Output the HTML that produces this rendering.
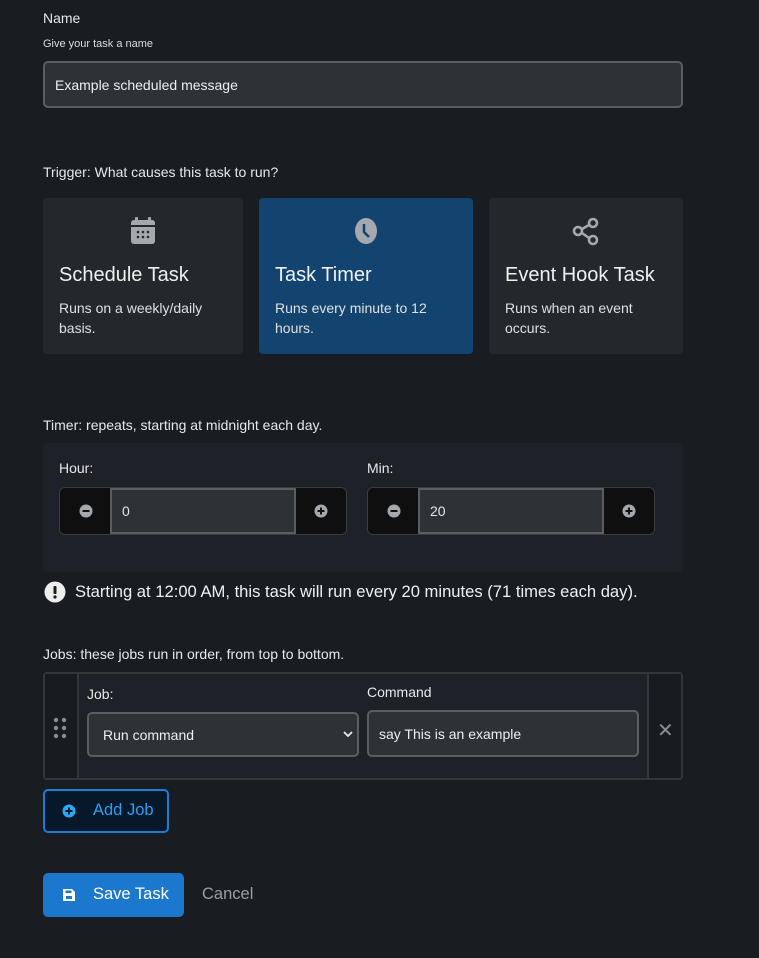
<!DOCTYPE html>
<html><head><style>
*{box-sizing:border-box;margin:0;padding:0}
body{width:759px;height:958px;background:#191c20;font-family:"Liberation Sans",sans-serif;color:#e6e6e6;position:relative;overflow:hidden}
.a{position:absolute}
.lbl{font-size:14px;color:#e8e8e8}
.card{position:absolute;top:198px;height:156px;background:#24282c;border-radius:4px}
.card.sel{background:#13436f}
.card h3{position:absolute;left:16px;top:66px;font-size:20px;font-weight:normal;color:#f0f0f0}
.card p{position:absolute;left:16px;top:100px;font-size:14px;line-height:20px;color:#e0e0e0;width:170px}
.card svg{position:absolute;top:18px}
.grp{position:absolute;top:487px;height:48px;border:1px solid #3a3e42;border-radius:6px;background:#111;overflow:hidden}
.grp .m{position:absolute;top:0;width:50px;height:46px;background:#0f0f0f}
.grp .in{position:absolute;top:0;left:50px;height:46px;background:#2e3236;border:2px solid #5a5e62;font-size:14px;padding:13px 10px}
</style></head><body>
<div class="a lbl" style="left:43px;top:10px">Name</div>
<div class="a" style="left:43px;top:38px;font-size:11px;color:#ddd">Give your task a name</div>
<div class="a" style="left:43px;top:61px;width:640px;height:47px;background:#2e3236;border:2px solid #5a5e62;border-radius:5px;font-size:14px;padding:14px 10px;color:#eee">Example scheduled message</div>
<div class="a lbl" style="left:43px;top:164px">Trigger: What causes this task to run?</div>

<div class="card" style="left:43px;width:200px">
<svg style="left:86px" width="28" height="30" viewBox="0 0 28 30"><rect x="2" y="4" width="24" height="24" rx="3" fill="#a5a9ad"/><rect x="6" y="1" width="3" height="6" rx="1" fill="#a5a9ad"/><rect x="19" y="1" width="3" height="6" rx="1" fill="#a5a9ad"/><g fill="#24282c"><rect x="2" y="9" width="24" height="2"/><circle cx="9" cy="16" r="1.3"/><circle cx="14" cy="16" r="1.3"/><circle cx="19" cy="16" r="1.3"/><circle cx="9" cy="21" r="1.3"/><circle cx="14" cy="21" r="1.3"/><circle cx="19" cy="21" r="1.3"/></g></svg>
<h3>Schedule Task</h3><p>Runs on a weekly/daily basis.</p></div>
<div class="card sel" style="left:259px;width:214px">
<svg style="left:92px" width="30" height="30" viewBox="0 0 30 30"><ellipse cx="15" cy="15" rx="11" ry="13" fill="#a5a9ad"/><path d="M13 8 V16 L18 21" stroke="#13436f" stroke-width="2.5" fill="none"/></svg>
<h3>Task Timer</h3><p>Runs every minute to 12 hours.</p></div>
<div class="card" style="left:489px;width:194px">
<svg style="left:82px" width="30" height="30" viewBox="0 0 30 30"><g stroke="#a5a9ad" stroke-width="2.6" fill="none"><circle cx="22" cy="7" r="4"/><circle cx="7" cy="15" r="4"/><circle cx="22" cy="24" r="4"/><path d="M11 13 L18 9 M11 17 L18 22"/></g></svg>
<h3>Event Hook Task</h3><p>Runs when an event occurs.</p></div>

<div class="a lbl" style="left:43px;top:417px">Timer: repeats, starting at midnight each day.</div>
<div class="a" style="left:43px;top:443px;width:640px;height:129px;background:#1e2228;border-radius:4px"></div>
<div class="a lbl" style="left:59px;top:460px">Hour:</div>
<div class="a lbl" style="left:367px;top:460px">Min:</div>
<div class="grp" style="left:59px;width:288px"><div class="m" style="left:0"><svg class="a" style="left:19px;top:16px" width="14" height="14"><circle cx="7" cy="7" r="6.5" fill="#a5a9ad"/><rect x="3.5" y="6" width="7" height="2" fill="#111"/></svg></div><div class="in" style="width:186px">0</div><div class="m" style="left:236px"><svg class="a" style="left:18px;top:16px" width="14" height="14"><circle cx="7" cy="7" r="6.5" fill="#a5a9ad"/><rect x="3.5" y="6" width="7" height="2" fill="#111"/><rect x="6" y="3.5" width="2" height="7" fill="#111"/></svg></div></div>
<div class="grp" style="left:367px;width:288px"><div class="m" style="left:0"><svg class="a" style="left:19px;top:16px" width="14" height="14"><circle cx="7" cy="7" r="6.5" fill="#a5a9ad"/><rect x="3.5" y="6" width="7" height="2" fill="#111"/></svg></div><div class="in" style="width:186px">20</div><div class="m" style="left:236px"><svg class="a" style="left:18px;top:16px" width="14" height="14"><circle cx="7" cy="7" r="6.5" fill="#a5a9ad"/><rect x="3.5" y="6" width="7" height="2" fill="#111"/><rect x="6" y="3.5" width="2" height="7" fill="#111"/></svg></div></div>
<svg class="a" style="left:44px;top:581px" width="22" height="22"><circle cx="11" cy="11" r="10.5" fill="#eee"/><rect x="9.5" y="5" width="3" height="8" rx="1" fill="#191c20"/><circle cx="11" cy="16" r="1.6" fill="#191c20"/></svg>
<div class="a" style="left:75px;top:582px;font-size:16.6px;color:#f0f0f0">Starting at 12:00 AM, this task will run every 20 minutes (71 times each day).</div>

<div class="a lbl" style="left:43px;top:646px">Jobs: these jobs run in order, from top to bottom.</div>
<div class="a" style="left:43px;top:672px;width:640px;height:108px;background:#1e2228;border:2px solid #33373b;border-radius:4px"></div>
<div class="a" style="left:77px;top:674px;width:2px;height:104px;background:#33373b"></div>
<div class="a" style="left:647px;top:674px;width:2px;height:104px;background:#33373b"></div>
<div class="a" style="left:45px;top:674px;width:32px;height:104px;background:#181b1f"></div>
<div class="a" style="left:649px;top:674px;width:32px;height:104px;background:#181b1f"></div>
<svg class="a" style="left:52px;top:716px" width="16" height="24"><g fill="#8a8e92"><circle cx="4" cy="4" r="2.2"/><circle cx="12" cy="4" r="2.2"/><circle cx="4" cy="12" r="2.2"/><circle cx="12" cy="12" r="2.2"/><circle cx="4" cy="20" r="2.2"/><circle cx="12" cy="20" r="2.2"/></g></svg>
<div class="a" style="left:657px;top:718px;font-size:20px;color:#8a8e92">✕</div>
<div class="a lbl" style="left:87px;top:686px">Job:</div>
<div class="a lbl" style="left:367px;top:684px">Command</div>
<div class="a" style="left:87px;top:712px;width:272px;height:45px;background:#2e3236;border:2px solid #5a5e62;border-radius:5px;font-size:14px;padding:13px 14px;color:#eee">Run command</div>
<svg class="a" style="left:343px;top:731px" width="10" height="7"><path d="M1 1 L5 5 L9 1" stroke="#eee" stroke-width="1.8" fill="none"/></svg>
<div class="a" style="left:367px;top:710px;width:272px;height:47px;background:#2e3236;border:2px solid #5a5e62;border-radius:5px;font-size:14px;padding:14px 10px;color:#eee">say This is an example</div>

<div class="a" style="left:43px;top:789px;width:126px;height:44px;background:#07182a;border:2px solid #1a7ed4;border-radius:5px"></div>
<svg class="a" style="left:62px;top:804px" width="14" height="14"><circle cx="7" cy="7" r="6.5" fill="#2aa8f0"/><rect x="3.5" y="6" width="7" height="2" fill="#07182a"/><rect x="6" y="3.5" width="2" height="7" fill="#07182a"/></svg>
<div class="a" style="left:93px;top:801px;font-size:16.5px;color:#2aa0f0">Add Job</div>

<div class="a" style="left:43px;top:873px;width:141px;height:44px;background:#1b78cc;border-radius:5px"></div>
<svg class="a" style="left:62px;top:888px" width="14" height="14"><path d="M1 1 H10 L13 4 V13 H1 Z" fill="#fff"/><rect x="4" y="8" width="6" height="3" fill="#1b78cc"/><rect x="3.5" y="2.5" width="6" height="2.5" fill="#1b78cc"/></svg>
<div class="a" style="left:93px;top:885px;font-size:16.5px;color:#fff">Save Task</div>
<div class="a" style="left:202px;top:885px;font-size:16.5px;color:#9a9ea2">Cancel</div>
</body></html>
